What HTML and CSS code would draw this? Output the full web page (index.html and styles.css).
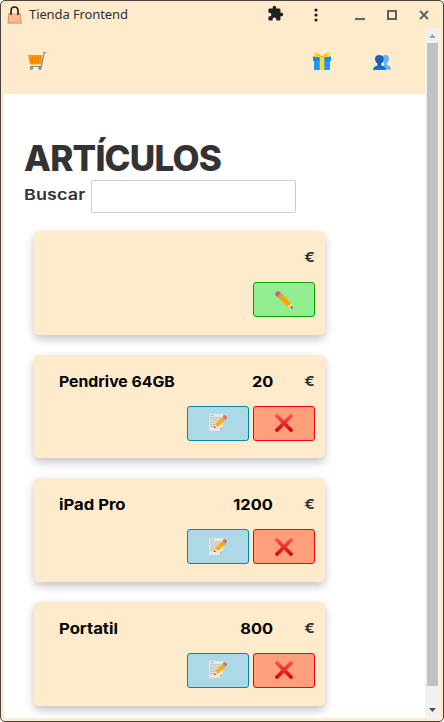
FILE: index.html
```html
<!DOCTYPE html>
<html lang="es">
<head>
<meta charset="utf-8">
<title>Tienda Frontend</title>
<link rel="stylesheet" href="styles.css">
</head>
<body>
<svg class="defs" width="0" height="0" aria-hidden="true">
  <defs>
    <linearGradient id="red" gradientUnits="userSpaceOnUse" x1="0" y1="0" x2="0" y2="18"><stop stop-color="#ff5751"/><stop offset="1" stop-color="#d00008"/></linearGradient>
    <linearGradient id="blue" x2="0" y2="1"><stop stop-color="#1768bd"/><stop offset=".65" stop-color="#125fb4"/><stop offset="1" stop-color="#1976d2"/></linearGradient>
    <symbol id="note" viewBox="0 0 18 18">
      <path d="M0 0H14V14L11 17H0Z" fill="#e7e7e7"/><path d="M14 13v1l-3 3v-3z" fill="#bdbdbd"/>
      <path d="M1 1.5H5M1 3.8H12M1 6H12M1 8.2H11M1 10.4H9M1 12.6H5" stroke="#b5b7b8" stroke-width=".9"/>
      <path d="M5 14l1.2-4L14 2.4 17 5.4 9 12.8z" fill="#fbae08"/><path d="M5 14l1.2-4 2.8 2.8z" fill="#f6d5a0"/><path d="M5 14l.5-1.8 1.3 1.3z" fill="#333"/>
      <path d="M13 3.3l.9-.9 3 3-.9.9z" fill="#9eabb0"/><path d="M13.9 2.4l1-1q1-.7 2.2.5t.6 2.3l-.8 1.2z" fill="#f05b5b"/>
    </symbol>
    <symbol id="cross" viewBox="0 0 18 18"><path d="M2 2L16 16M16 2L2 16" stroke="url(#red)" stroke-width="3.800" stroke-linecap="round"/></symbol>
    <symbol id="pencil" viewBox="0 0 18 18">
      <path d="M3.2 6.8L6.8 2.8 16.3 12l1.2 5.4-5.2-1.4z" fill="#ffad00"/><path d="M4.6 5.2L14.6 14" stroke="#f38c00" stroke-width="1"/>
      <path d="M12.3 16l4-4 1.2 5.4z" fill="#ffdda2"/><path d="M15.2 16.8l1.8-1.9.8 2.8z" fill="#48494d"/>
      <path d="M2.3 5.9l3.6-4 1.6 1.6-3.7 4z" fill="#9ca8ae"/><path d="M2.3 5.9L.7 4.3Q-.4 2.9 1 1.3 2.5-.3 4.1.4l1.8 1.5z" fill="#ed5360"/>
    </symbol>
  </defs>
</svg>
<div class="window">
  <header class="titlebar">
    <svg class="bag" viewBox="0 0 16 18"><path d="M1 7h13l1 10.5H.5z" fill="#ffb98f"/><path d="M.5 17h14.5" stroke="#b79b80"/><path d="M1.5 7v10M13 7l.7 10" stroke="#d69d79"/><path d="M4 9V5q0-4 3.5-4T11 5v4" fill="none" stroke="#1b1b1b" stroke-width="1.6"/></svg>
    <span class="caption">Tienda Frontend</span>
    <svg class="puzzle" viewBox="0 0 24 24"><path fill="#202124" d="M20.5 11H19V7c0-1.100-.9-2-2-2h-4V3.500a2.500 2.500 0 0 0-5 0V5H4c-1.100 0-2 .9-2 2v3.800h1.500a2.700 2.700 0 0 1 0 5.400H2V20c0 1.100.9 2 2 2h3.800v-1.500a2.700 2.700 0 0 1 5.400 0V22H17c1.100 0 2-.9 2-2v-4h1.500a2.500 2.500 0 0 0 0-5z"/></svg>
    <svg class="dots" viewBox="0 0 4 14"><g fill="#202124"><circle cx="2" cy="2" r="1.6"/><circle cx="2" cy="7" r="1.6"/><circle cx="2" cy="12" r="1.6"/></g></svg>
    <svg class="controls" viewBox="0 0 76 12"><path d="M0 10h10" stroke="#5f6368" stroke-width="2"/><path d="M33 2h8v8h-8z" fill="none" stroke="#5f6368" stroke-width="2"/><path d="M65 2l8 8m0-8l-8 8" stroke="#5f6368" stroke-width="2"/></svg>
  </header>
  <div class="viewport">
    <div class="page">
      <nav class="nav">
        <svg class="cart" viewBox="0 0 18 18"><path d="M0 3h14.500l-1 9.500H2z" fill="#ff9800"/><path d="M4 5v6M7 5v6M10 5v6" stroke="#dc7400" stroke-width="1"/><path d="M16 1L13.500 14.500H2.500" fill="none" stroke="#78909c" stroke-width="1.200"/><path d="M15.300.8H18" stroke="#f27a20" stroke-width="1.600"/><g fill="#b0bec5" stroke="#607d8b"><circle cx="3.500" cy="16.200" r="1.200"/><circle cx="12" cy="16.200" r="1.200"/></g></svg>
        <svg class="gift" viewBox="0 0 18 18"><path d="M1 6h16v12H1z" fill="#2196f3"/><path d="M0 4.500h18V9H0z" fill="#1f87dc"/><path d="M6.700 5h4.600v13H6.700z" fill="#fdd835"/><path d="M9 5Q4 0 2 .4T2 5zM9 5q5-5 7-4.600T16 5z" fill="#ffd52f"/><path d="M9 5Q6 2.500 4 2.500M9 5q3-2.500 5-2.500" fill="none" stroke="#e9a900"/></svg>
        <svg class="users" viewBox="0 0 18 15"><path d="M8 14.500q0-3.500 3-4V8Q9 6 9 4q0-4 3.500-4T16 4q0 2.700-1.800 4v2.300q3.800.7 3.800 4.200z" fill="#67b4f5"/><path d="M0 15q0-3.500 4.500-4.500V8.500Q2 7 2 4q0-4 4.300-4T10.700 4q0 3-2.500 4.500v2Q13 11.500 13 15z" fill="url(#blue)"/></svg>
      </nav>
      <main class="content">
        <h1>ARTÍCULOS</h1>
        <div class="search"><label for="q">Buscar</label><input id="q" type="text"></div>
        <section class="cards">
          <article class="card">
            <div class="row"><span class="name"></span><span class="price"></span><span class="euro">€</span></div>
            <div class="actions"><button class="save"><svg><use href="#pencil"/></svg></button></div>
          </article>
          <article class="card">
            <div class="row"><span class="name">Pendrive 64GB</span><span class="price">20</span><span class="euro">€</span></div>
            <div class="actions"><button class="edit"><svg><use href="#note"/></svg></button><button class="delete"><svg><use href="#cross"/></svg></button></div>
          </article>
          <article class="card">
            <div class="row"><span class="name wide">iPad Pro</span><span class="price">1200</span><span class="euro">€</span></div>
            <div class="actions"><button class="edit"><svg><use href="#note"/></svg></button><button class="delete"><svg><use href="#cross"/></svg></button></div>
          </article>
          <article class="card">
            <div class="row"><span class="name wide">Portatil</span><span class="price">800</span><span class="euro">€</span></div>
            <div class="actions"><button class="edit"><svg><use href="#note"/></svg></button><button class="delete"><svg><use href="#cross"/></svg></button></div>
          </article>
        </section>
      </main>
    </div>
    <div class="scrollbar">
      <svg viewBox="0 0 7 4"><path d="M0 4L3.500 0 7 4z" fill="#a3a3a3"/></svg>
      <div class="thumb"></div>
      <svg viewBox="0 0 7 4"><path d="M0 0h7L3.500 4z" fill="#505050"/></svg>
    </div>
  </div>
</div>
</body>
</html>
```

FILE: styles.css
```css
* { box-sizing: border-box; }
html { background: #fff; }
body { margin: 0; overflow: hidden; }
.defs { position: absolute; }
svg { display: block; flex: none; }
.window { width: 444px; height: 722px; border: 1px solid #47433e; border-radius: 5px; background: #feebcb; padding: 0 3px 3px; display: flex; flex-direction: column; overflow: hidden; }
.titlebar { height: 27px; flex: none; display: flex; align-items: center; padding-left: 3px; }
.bag { width: 16px; height: 18px; }
.caption { font: 13px/20px "Noto Sans", sans-serif; letter-spacing: -.1px; color: #303034; margin: -1px 0 0 6px; width: 239px; }
.puzzle { width: 17px; height: 17px; margin: -2px 0 0 -1px; }
.dots { width: 4px; height: 14px; margin-left: 30px; }
.controls { width: 76px; height: 12px; margin-left: 37px; }
.viewport { flex: 1; min-height: 0; display: flex; background: #fff; }
.page { width: 421px; overflow: hidden; font-family: Inter, sans-serif; color: #333; }
.nav { height: 66px; background: #feebcb; display: flex; padding: 24px 0 0 24px; }
.cart, .gift { width: 18px; height: 18px; }
.gift { margin-left: 267px; }
.users { width: 18px; height: 15px; margin: 3px 0 0 42px; }
.content { padding: 43px 20px 0; }
h1 { margin: 0; height: 43px; font: 800 35px/43px Inter, sans-serif; letter-spacing: -.8px; white-space: nowrap; }
.search { height: 33px; display: flex; align-items: center; }
label { width: 67px; font-size: 15px; font-weight: 600; line-height: 20px; padding-bottom: 3px; letter-spacing: .1px; transform: scaleX(1.195); transform-origin: left; }
input { width: 205px; height: 33px; border: 1px solid #ccc; border-radius: 2px; background: #fff; padding: 0 5px; }
.cards { display: flex; flex-direction: column; gap: 20px; padding: 18px 10px; width: 311px; }
.card { height: 103.66px; flex: none; border-radius: 5px; background: #feebcb; box-shadow: 0 4px 10px rgba(0,0,0,.24); padding: 16px 10px 0 25px; }
.row { display: flex; height: 35px; line-height: 22px; font-size: 15px; font-weight: 700; color: #000; white-space: nowrap; }
.name { flex: 1; transform: scaleX(1.053); transform-origin: left; }
.wide { transform: scaleX(1.11); }
.price { font-size: 14px; transform: scaleX(1.17); transform-origin: right; }
.euro { width: 42px; text-align: right; font-size: 12.5px; color: #333; font-weight: 700; transform: scaleX(1.25); transform-origin: right; }
.actions { display: flex; justify-content: flex-end; gap: 4px; }
button { width: 62px; height: 35px; padding: 0; border: 1px solid; border-radius: 3px; display: flex; align-items: center; justify-content: center; }
button svg { width: 18px; height: 18px; }
.save { background: #90ee90; border-color: #10a300; }
.edit { background: #add8e6; border-color: #0088a8; }
.delete { background: #ffa07a; border-color: #f00018; }
.scrollbar { width: 15px; background: #f1f1f1; display: flex; flex-direction: column; align-items: center; padding: 6px 0; }
.scrollbar svg { width: 7px; height: 4px; }
.thumb { width: 11px; height: 643px; background: #c1c1c1; margin: 5px 0 22px; flex: none; }
```
